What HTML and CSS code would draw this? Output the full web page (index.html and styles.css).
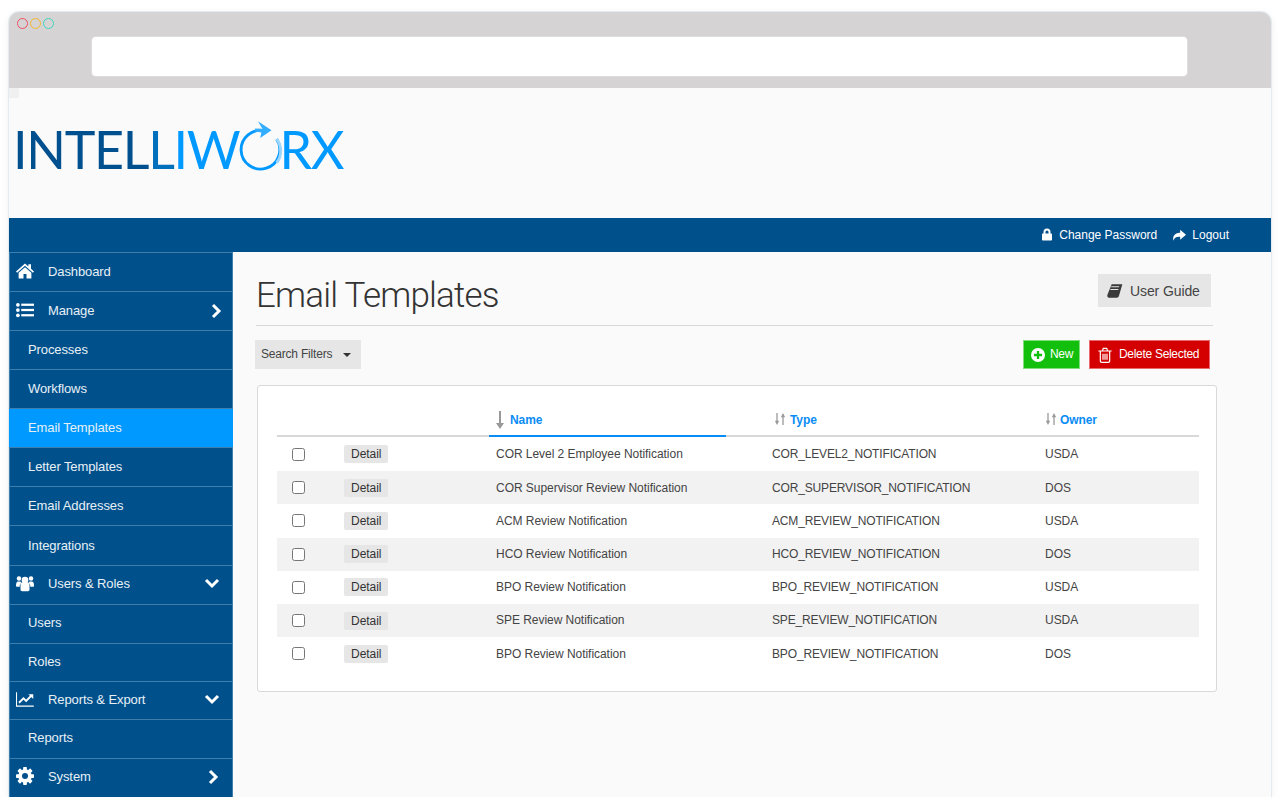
FILE: index.html
```html
<!DOCTYPE html>
<html lang="en">
<head>
	<meta charset="UTF-8">
	<title>Intelliworx - Email Templates</title>
	<link rel="stylesheet" href="styles.css">
</head>
<body>
	<div class="window">
		<div class="chrome">
			<div class="dots">
				<span class="dot red"></span>
				<span class="dot yellow"></span>
				<span class="dot green"></span>
			</div>
			<div class="address"></div>
		</div>
		<div class="brand">
			<span class="corner"></span>
			<div class="logo">
				<span class="dark">INTEL</span><span class="mid">L</span><span class="light">IW</span><svg class="ring" viewBox="0 0 44 48"><path d="M28 9.600A17.200 17.200 0 1 0 38.600 17" fill="none" stroke="#0099ff" stroke-width="2.600"/><path d="M38.600 17a17.200 17.200 0 0 1 0 21" fill="none" stroke="#9dd6ff" stroke-width="2.600"/><path d="M22 1l12 8L24 16l1-5-6-1 .5-2.500 6.500.5z" fill="#33adff"/></svg><span class="light">RX</span>
			</div>
		</div>
		<div class="topbar">
			<a class="toplink"><svg class="ico12" viewBox="0 0 24 24"><path d="M5 10V7a7 7 0 0 1 14 0v3h1.500c.8 0 1.500.7 1.500 1.500v11c0 .8-.7 1.500-1.500 1.500h-17C2.700 24 2 23.300 2 22.500v-11C2 10.700 2.700 10 3.500 10zm4 0h6V7a3 3 0 0 0-6 0z" fill="#fff"/></svg>Change Password</a>
			<a class="toplink"><svg class="ico13" viewBox="0 0 24 24"><path d="M14 3l10 8.500L14 20v-5c-6 0-10 1-11.500 7C.500 14 5 7.500 14 8z" fill="#fff"/></svg>Logout</a>
		</div>
		<div class="layout">
			<ul class="sidebar">
				<li class="head">
					<svg class="nav_ico" viewBox="0 0 24 24"><path d="M12 2L0 12.500l1.500 1.700L12 5l10.500 9.200 1.500-1.700-4-3.500V3h-3.500v3zM12 7L3.500 14.400V22H10v-6h4v6h6.500v-7.600z" fill="#fff"/></svg>
					<span>Dashboard</span>
				</li>
				<li class="head">
					<svg class="nav_ico" viewBox="0 0 24 24"><g fill="#fff"><circle cx="2.500" cy="5" r="2.500"/><circle cx="2.500" cy="12" r="2.500"/><circle cx="2.500" cy="19" r="2.500"/><rect x="7" y="3.500" width="17" height="3"/><rect x="7" y="10.500" width="17" height="3"/><rect x="7" y="17.500" width="17" height="3"/></g></svg>
					<span>Manage</span>
					<svg class="chev_r" viewBox="0 0 12 16"><path d="M3 2l6 6-6 6" fill="none" stroke="#fff" stroke-width="3"/></svg>
				</li>
				<li>Processes</li>
				<li>Workflows</li>
				<li class="active">Email Templates</li>
				<li>Letter Templates</li>
				<li>Email Addresses</li>
				<li class="tall">Integrations</li>
				<li class="head">
					<svg class="nav_ico" viewBox="0 0 24 24"><g fill="#fff"><circle cx="12" cy="8" r="4.500"/><circle cx="4" cy="6" r="3"/><circle cx="20" cy="6" r="3"/><path d="M6 14c0-2 1.500-3 3-3h6c1.500 0 3 1 3 3v7c0 1-1 2-2 2H8c-1 0-2-1-2-2z"/><path d="M0 15c0-3 1-5 3-5h3c.3 1 .8 1.500 1.300 2-1.500 1-2.300 2-2.300 3.500V17H1c-.6 0-1-.5-1-1zM24 15c0-3-1-5-3-5h-3c-.3 1-.8 1.500-1.300 2 1.500 1 2.300 2 2.300 3.500V17h4c.6 0 1-.5 1-1z"/></g></svg>
					<span>Users &amp; Roles</span>
					<svg class="chev_d" viewBox="0 0 16 12"><path d="M2 3l6 6 6-6" fill="none" stroke="#fff" stroke-width="3"/></svg>
				</li>
				<li>Users</li>
				<li class="short">Roles</li>
				<li class="head short">
					<svg class="nav_ico" viewBox="0 0 24 24"><path d="M.7 3v18.500h23" fill="none" stroke="#fff" stroke-width="1.400"/><path d="M4 17l6-6 3.500 3.500L20 8" fill="none" stroke="#fff" stroke-width="2.400"/><path d="M16.500 5.500H23V12z" fill="#fff"/></svg>
					<span>Reports &amp; Export</span>
					<svg class="chev_d" viewBox="0 0 16 12"><path d="M2 3l6 6 6-6" fill="none" stroke="#fff" stroke-width="3"/></svg>
				</li>
				<li>Reports</li>
				<li class="head">
					<svg class="nav_ico" viewBox="0 0 24 24"><g fill="#fff"><circle cx="12" cy="12" r="9"/><rect x="9.500" y="0" width="5" height="24" rx="1"/><rect x="9.500" y="0" width="5" height="24" rx="1" transform="rotate(45 12 12)"/><rect x="9.500" y="0" width="5" height="24" rx="1" transform="rotate(90 12 12)"/><rect x="9.500" y="0" width="5" height="24" rx="1" transform="rotate(135 12 12)"/></g><circle cx="12" cy="12" r="4" fill="#00508c"/></svg>
					<span>System</span>
					<svg class="chev_r sys" viewBox="0 0 12 16"><path d="M3 2l6 6-6 6" fill="none" stroke="#fff" stroke-width="3"/></svg>
				</li>
			</ul>
			<div class="main">
				<div class="title_row">
					<h1>Email Templates</h1>
					<a class="guide"><svg class="ico16" viewBox="0 0 24 24"><path d="M7 2h16l-5 17c-.5 1.500-1.500 3-3.500 3H3c-2 0-3-2-2.500-4zM6 6.500h12l.5-1.500h-12zM4.800 10.500h12l.5-1.500h-12z" fill="#3a3a3a" fill-rule="evenodd"/></svg>User Guide</a>
				</div>
				<div class="toolbar">
					<a class="filters">Search Filters<i class="caret"></i></a>
					<div class="actions">
						<a class="btn btn_new"><svg class="ico14" viewBox="0 0 24 24"><circle cx="12" cy="12" r="12" fill="#fff"/><path d="M10 5h4v5h5v4h-5v5h-4v-5H5v-4h5z" fill="#12bf0c"/></svg>New</a>
						<a class="btn btn_del"><svg class="ico16" viewBox="0 0 24 24"><path d="M2 6h20M8 6l1.500-4h5L16 6M5 6v15c0 1 .8 2 2 2h10c1.200 0 2-1 2-2V6M9 10v9M12 10v9M15 10v9" fill="none" stroke="#fff" stroke-width="1.800"/></svg>Delete Selected</a>
					</div>
				</div>
				<div class="card">
					<table class="grid">
						<colgroup>
							<col class="c_check"><col class="c_detail"><col class="c_name"><col class="c_type"><col>
						</colgroup>
						<thead>
							<tr>
								<th></th>
								<th></th>
								<th class="sorted"><svg class="sort_one" viewBox="0 0 8 18"><path d="M4 0v14" stroke="#999" stroke-width="2"/><path d="M0 12h8l-4 6z" fill="#999"/></svg>Name</th>
								<th class="th_type"><svg class="sort_two" viewBox="0 0 14 14"><use href="#sort"/></svg>Type</th>
								<th><svg class="sort_two" viewBox="0 0 14 14"><use href="#sort"/></svg>Owner</th>
							</tr>
						</thead>
						<tbody>
							<tr><td><input type="checkbox"></td><td><a class="detail">Detail</a></td><td>COR Level 2 Employee Notification</td><td class="td_type">COR_LEVEL2_NOTIFICATION</td><td>USDA</td></tr>
							<tr><td><input type="checkbox"></td><td><a class="detail">Detail</a></td><td>COR Supervisor Review Notification</td><td class="td_type">COR_SUPERVISOR_NOTIFICATION</td><td>DOS</td></tr>
							<tr><td><input type="checkbox"></td><td><a class="detail">Detail</a></td><td>ACM Review Notification</td><td class="td_type">ACM_REVIEW_NOTIFICATION</td><td>USDA</td></tr>
							<tr><td><input type="checkbox"></td><td><a class="detail">Detail</a></td><td>HCO Review Notification</td><td class="td_type">HCO_REVIEW_NOTIFICATION</td><td>DOS</td></tr>
							<tr><td><input type="checkbox"></td><td><a class="detail">Detail</a></td><td>BPO Review Notification</td><td class="td_type">BPO_REVIEW_NOTIFICATION</td><td>USDA</td></tr>
							<tr><td><input type="checkbox"></td><td><a class="detail">Detail</a></td><td>SPE Review Notification</td><td class="td_type">SPE_REVIEW_NOTIFICATION</td><td>USDA</td></tr>
							<tr><td><input type="checkbox"></td><td><a class="detail">Detail</a></td><td>BPO Review Notification</td><td class="td_type">BPO_REVIEW_NOTIFICATION</td><td>DOS</td></tr>
						</tbody>
					</table>
				</div>
			</div>
		</div>
	</div>
	<svg class="defs" width="0" height="0"><symbol id="sort" viewBox="0 0 14 14"><path d="M3.500 0v10M10.500 4v10" stroke="#999" stroke-width="1.500"/><path d="M1 9h5l-2.500 5zM8 5h5l-2.500-5z" fill="#999"/></symbol></svg>
</body>
</html>
```

FILE: styles.css
```css
html,body,h1,ul,li{padding: 0;margin: 0;}
li{list-style: none;}
body{background: #fff;font: 12px/1.2 "Liberation Sans",Arial,sans-serif;color: #444;overflow: hidden;}
.defs{position: absolute;}

.window{width: 1262px;height: 785px;margin: 12px 0 0 9px;background: #fafafa;border-radius: 10px 10px 0 0;box-shadow: 0 0 0 1px #e3ebef,0 2px 8px rgba(0,0,0,0.08);overflow: hidden;display: flex;flex-direction: column;}

/* browser frame */
.chrome{height: 76px;background: #d5d3d4;box-sizing: border-box;padding-top: 6px;}
.dots{display: flex;gap: 2px;height: 19px;padding-left: 8px;}
.dot{width: 9px;height: 9px;border: 1px solid;border-radius: 50%;}
.red{border-color: #ef4f63;}
.yellow{border-color: #f3b62e;}
.green{border-color: #3fd6bd;}
.address{height: 39px;margin: 0 84px 0 83px;background: #fff;border-radius: 4px;box-shadow: 0 0 0 1px #dedede;}

/* logo */
.brand{height: 130px;position: relative;display: flex;align-items: center;padding-left: 4px;box-sizing: border-box;}
.corner{position: absolute;left: 0;top: 0;width: 10px;height: 10px;background: #f0f0f0;}
.logo{display: flex;align-items: center;font: 400 52px/1 Lato,"Liberation Sans",sans-serif;letter-spacing: -1.3px;margin-top: -9px;}
.dark{color: #00508f;}
.mid{color: #0070bd;}
.light{color: #0099ff;}
.ring{width: 50px;height: 54px;margin: 0 -4px 3px -6px;}

/* top bar */
.topbar{height: 34px;background: #00508c;display: flex;justify-content: flex-end;align-items: center;gap: 15px;padding-right: 42px;flex: none;}
.toplink{display: flex;align-items: center;gap: 6px;color: #fff;}
.ico12{width: 12px;height: 13px;}
.ico13{width: 14px;height: 14px;}
.ico14{width: 14px;height: 14px;}
.ico16{width: 16px;height: 16px;}

.layout{display: flex;flex: 1;min-height: 0;}

/* side menu */
.sidebar{width: 224px;background: #00508c;flex: none;box-shadow: inset 1px 0 0 #3f7fae,inset -1px 0 0 #3f7fae;}
.sidebar li{height: 39px;box-sizing: border-box;border-top: 1px solid #3f7fae;display: flex;align-items: center;padding-left: 19px;font-size: 13px;letter-spacing: -0.1px;color: #e8f0f6;position: relative;}
.sidebar li:nth-child(n+9){padding-bottom: 2px;}
.sidebar .head{padding-left: 7px;}
.sidebar .tall{height: 40px;}
.sidebar .short{height: 38px;}
.sidebar .active{background: #0099ff;}
.nav_ico{width: 18px;height: 18px;margin-right: 14px;position: relative;top: -1px;}
.chev_r{width: 12px;height: 16px;position: absolute;right: 11px;top: 11px;}
.chev_r.sys{right: 14px;top: 10px;}
.chev_d{width: 16px;height: 12px;position: absolute;right: 13px;top: 11px;}

/* page */
.main{padding: 22px 0 0 23px;width: 960px;}
.title_row{display: flex;justify-content: space-between;align-items: flex-start;width: 957px;height: 51px;border-bottom: 1px solid #d8d8d8;}
h1{font: 300 35px/43px Roboto,"Liberation Sans",sans-serif;letter-spacing: -0.8px;color: #333;}
.guide{display: flex;align-items: center;gap: 7px;width: 113px;height: 33px;box-sizing: border-box;padding: 1px 0 0 9px;margin-right: 2px;background: #e6e6e6;font-size: 14px;letter-spacing: -0.1px;color: #444;}
.toolbar{display: flex;justify-content: space-between;margin: 14px 6px 0 -1px;}
.filters{display: flex;align-items: center;height: 29px;width: 106px;box-sizing: border-box;padding-left: 6px;background: #e6e6e6;letter-spacing: -0.2px;color: #444;}
.caret{width: 0;height: 0;border: 4px solid transparent;border-top: 4px solid #333;border-bottom: 0;margin-left: 11px;}
.actions{display: flex;gap: 9px;}
.btn{display: flex;align-items: center;gap: 5px;height: 29px;box-sizing: border-box;color: #fff;letter-spacing: -0.3px;}
.btn_new{width: 57px;padding-left: 7px;background: #12bf0c;border: 1px solid #7fdf7c;}
.btn_del{width: 121px;padding-left: 7px;background: #d40000;border: 1px solid #e86a6a;gap: 6px;}

/* table */
.card{width: 960px;height: 307px;box-sizing: border-box;margin: 16px 0 0 1px;padding: 19px 18px 0 19px;background: #fff;border: 1px solid #d9d9d9;border-radius: 3px;}
.grid{width: 922px;table-layout: fixed;border-collapse: collapse;}
.c_check{width: 57px;}
.c_detail{width: 155px;}
.c_name{width: 237px;}
.c_type{width: 312px;}
.grid th{height: 30px;padding: 0 7px;text-align: left;font-weight: bold;letter-spacing: -0.1px;color: #0a8cf5;border-bottom: 2px solid #d8d8d8;white-space: nowrap;}
.grid th.sorted{border-bottom-color: #0a8cf5;}
.grid th.th_type{padding-left: 48px;}
.grid th.th_type .sort_two{margin-right: 4px;}
.grid td.td_type{padding-left: 46px;letter-spacing: -0.15px;}
.grid td{height: 33.2px;padding: 0 7px;letter-spacing: -0.04px;color: #444;}
.grid td:first-child{padding: 0 0 0 15px;}
.grid td:nth-child(2){padding: 0 0 0 10px;}
.grid tbody tr:first-child td{height: 34.2px;}
.grid tbody tr:nth-child(even){background: #f2f2f2;}
.grid input{display: block;margin: 0;}
.detail{display: inline-block;height: 18px;line-height: 18px;padding: 0 7px;background: #e6e6e6;border-radius: 2px;color: #333;}
.sort_one{width: 8px;height: 18px;margin-right: 6px;vertical-align: -5px;}
.sort_two{width: 12px;height: 14px;margin-right: 3px;vertical-align: -2px;}
```
